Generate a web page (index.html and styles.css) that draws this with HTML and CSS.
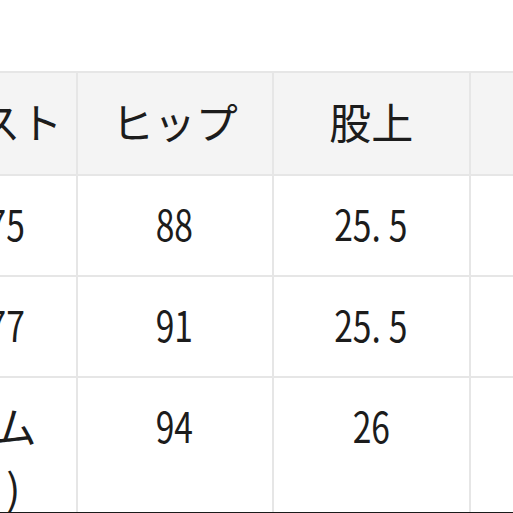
FILE: index.html
```html
<!DOCTYPE html>
<html lang="ja">
<head>
<meta charset="utf-8">
<link rel="stylesheet" href="styles.css">
</head>
<body>
<div class="page">
  <table class="size-table">
    <colgroup><col><col><col><col></colgroup>
    <thead>
      <tr>
        <th>ウエスト</th>
        <th>ヒップ</th>
        <th>股上</th>
        <th>股下</th>
      </tr>
    </thead>
    <tbody>
      <tr>
        <td><span class="num">66~75</span></td>
        <td><span class="num">88</span></td>
        <td><span class="num">25.<span class="gap"></span>5</span></td>
        <td><span class="num">70</span></td>
      </tr>
      <tr>
        <td><span class="num">68~77</span></td>
        <td><span class="num">91</span></td>
        <td><span class="num">25.<span class="gap"></span>5</span></td>
        <td><span class="num">71</span></td>
      </tr>
      <tr>
        <td>総ゴム&nbsp;<br>(90&nbsp;)</td>
        <td><span class="num">94</span></td>
        <td><span class="num">26</span></td>
        <td><span class="num">72</span></td>
      </tr>
    </tbody>
  </table>
</div>
</body>
</html>
```

FILE: styles.css
```css
html, body {
  margin: 0;
  padding: 0;
  background: #ffffff;
}
.page {
  width: 513px;
  height: 513px;
  box-sizing: border-box;
  overflow: hidden;
  padding-top: 71px;
  border-bottom: 1px solid #1a1a1a;
  font-family: "Noto Sans CJK JP", "Noto Sans", sans-serif;
  color: #1c1c1c;
}
.size-table {
  margin-left: -121px;
  width: 788px;
  table-layout: fixed;
  border-collapse: collapse;
}
.size-table th,
.size-table td {
  border: 2px solid #e6e6e6;
  text-align: center;
  vertical-align: top;
  font-size: 42px;
  font-weight: 400;
  line-height: 62px;
  padding: 16px 0 21px;
}
.size-table th {
  background: #f4f4f4;
  padding: 17px 0 22px;
}
.num {
  display: inline-block;
  transform: scaleX(0.8);
}
.gap {
  display: inline-block;
  width: 10px;
}
```
